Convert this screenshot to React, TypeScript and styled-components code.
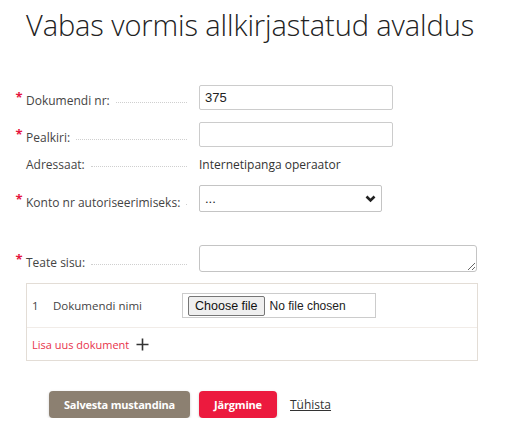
import React from "react";
import styled, { createGlobalStyle } from "styled-components";

const Global = createGlobalStyle`
  html, body { margin: 0; padding: 0; background: #fff; }
  body { font-family: "Open Sans", "Liberation Sans", sans-serif; color: #333; }
  * { box-sizing: border-box; }
`;

const Page = styled.div`
  padding: 7px 0 0 12px;
`;

const Title = styled.h1`
  margin: 0 0 42px 14px;
  font-size: 29px;
  line-height: 36px;
  font-weight: 300;
  color: #222;
  letter-spacing: -0.1px;
`;

const Row = styled.div<{ $mt: number }>`
  display: flex;
  align-items: flex-end;
  margin-top: ${(p) => p.$mt}px;
`;

const Star = styled.span`
  width: 14px;
  flex: none;
  color: #e5173f;
  font-size: 13px;
  font-weight: 700;
  line-height: 18px;
  text-align: center;
  transform: translateY(-4px);
`;

const Label = styled.label`
  display: flex;
  align-items: baseline;
  width: 161px;
  flex: none;
  margin-right: 12px;
  font-size: 12px;
  line-height: 18px;
  color: #444;
  white-space: nowrap;
`;

const Leader = styled.span`
  flex: 1;
  margin-left: 6px;
  border-bottom: 1px dotted #cfcfcf;
  transform: translateY(-2px);
`;

const TextInput = styled.input`
  width: 194px;
  height: 25px;
  border: 1px solid #cccccc;
  border-radius: 2px;
  padding: 0 5px;
  font-family: "Liberation Sans", Arial, sans-serif;
  font-size: 13px;
  color: #222;
  outline: none;
`;

const Value = styled.span`
  font-size: 12px;
  line-height: 18px;
  color: #333;
`;

const SelectWrap = styled.div`
  position: relative;
  width: 183px;
  height: 27px;
`;

const Select = styled.select`
  appearance: none;
  width: 100%;
  height: 100%;
  border: 1px solid #c4c4c4;
  border-radius: 2px;
  background: #fff;
  padding: 0 5px;
  font-family: "Liberation Sans", Arial, sans-serif;
  font-size: 13px;
  color: #222;
  outline: none;
`;

const Chevron = styled.svg`
  position: absolute;
  right: 6px;
  top: 10px;
  pointer-events: none;
`;

const TextArea = styled.textarea`
  width: 278px;
  height: 27px;
  border: 1px solid #c4c4c4;
  border-radius: 3px;
  padding: 4px 5px;
  font-family: "Liberation Sans", Arial, sans-serif;
  font-size: 13px;
  outline: none;
  display: block;
`;

const DocBox = styled.div`
  margin: 11px 0 0 14px;
  width: 452px;
  border: 1px solid #e3ddd6;
`;

const DocRow = styled.div<{ $h: number; $sep?: boolean }>`
  display: flex;
  align-items: center;
  height: ${(p) => p.$h}px;
  padding: 0 5px;
  font-size: 11.5px;
  color: #444;
  border-top: ${(p) => (p.$sep ? "1px solid #f1ece8" : "none")};
`;

const DocNum = styled.span`
  width: 21px;
  flex: none;
`;

const DocName = styled.span`
  width: 129px;
  flex: none;
`;

const FileField = styled.label`
  display: flex;
  align-items: center;
  gap: 5px;
  width: 194px;
  height: 25px;
  border: 1px solid #cccccc;
  padding: 0 5px;
  font-family: "Liberation Sans", Arial, sans-serif;
  font-size: 12px;
  color: #222;
  cursor: pointer;
`;

const HiddenFile = styled.input`
  display: none;
`;

const FileButton = styled.span`
  display: inline-flex;
  align-items: center;
  height: 20px;
  padding: 0 6px;
  border: 1px solid #767676;
  border-radius: 2px;
  background: #efefef;
  color: #111;
  font-size: 12.5px;
`;

const AddLink = styled.a`
  display: flex;
  align-items: center;
  gap: 7px;
  color: #e8334b;
  text-decoration: none;
  font-size: 11px;
  cursor: pointer;
`;

const Buttons = styled.div`
  display: flex;
  align-items: center;
  margin: 30px 0 0 37px;
`;

const Btn = styled.button<{ $variant: "gray" | "red"; $w: number }>`
  width: ${(p) => p.$w}px;
  height: 27px;
  border: none;
  border-radius: 4px;
  background: ${(p) => (p.$variant === "gray" ? "#8c8071" : "#ec1a3e")};
  color: #fff;
  font-family: "Open Sans", sans-serif;
  font-weight: 700;
  font-size: 11px;
  letter-spacing: -0.2px;
  box-shadow: 0 1px 3px rgba(0, 0, 0, 0.18);
  margin-right: ${(p) => (p.$variant === "gray" ? 9 : 13)}px;
  padding: 0;
  cursor: pointer;
`;

const Cancel = styled.a`
  font-size: 12px;
  color: #333;
  text-decoration: underline;
  cursor: pointer;
`;

export default function App() {
  return (
    <>
      <Global />
      <Page>
        <Title>Vabas vormis allkirjastatud avaldus</Title>

        <Row $mt={0}>
          <Star>*</Star>
          <Label>
            Dokumendi nr:<Leader />
          </Label>
          <TextInput defaultValue="375" />
        </Row>

        <Row $mt={12}>
          <Star>*</Star>
          <Label>
            Pealkiri:<Leader />
          </Label>
          <TextInput />
        </Row>

        <Row $mt={9}>
          <Star />
          <Label>
            Adressaat:<Leader />
          </Label>
          <Value>Internetipanga operaator</Value>
        </Row>

        <Row $mt={11}>
          <Star>*</Star>
          <Label>
            Konto nr autoriseerimiseks:<Leader />
          </Label>
          <SelectWrap>
            <Select defaultValue="none">
              <option value="none">...</option>
            </Select>
            <Chevron width="11" height="8" viewBox="0 0 11 8">
              <polyline
                points="1.5,1.5 5.5,5.5 9.5,1.5"
                fill="none"
                stroke="#222"
                strokeWidth="2.6"
              />
            </Chevron>
          </SelectWrap>
        </Row>

        <Row $mt={33}>
          <Star>*</Star>
          <Label>
            Teate sisu:<Leader />
          </Label>
          <TextArea />
        </Row>

        <DocBox>
          <DocRow $h={43}>
            <DocNum>1</DocNum>
            <DocName>Dokumendi nimi</DocName>
            <FileField>
              <HiddenFile type="file" />
              <FileButton>Choose file</FileButton>
              No file chosen
            </FileField>
          </DocRow>
          <DocRow $h={33} $sep>
            <AddLink>
              Lisa uus dokument
              <svg width="13" height="13" viewBox="0 0 13 13">
                <path d="M6.5 0.5v12M0.5 6.5h12" stroke="#333" strokeWidth="1.6" />
              </svg>
            </AddLink>
          </DocRow>
        </DocBox>

        <Buttons>
          <Btn $variant="gray" $w={141}>Salvesta mustandina</Btn>
          <Btn $variant="red" $w={78}>Järgmine</Btn>
          <Cancel>Tühista</Cancel>
        </Buttons>
      </Page>
    </>
  );
}
